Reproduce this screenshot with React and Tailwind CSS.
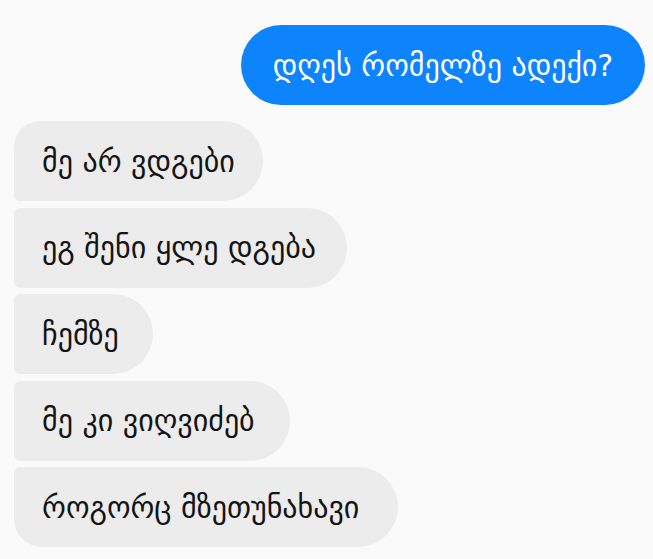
export default function App() {
  const received = [
    { text: 'მე არ ვდგები', w: 'w-[249px]', r: 'rounded-tl-[26px] rounded-bl-[6px]' },
    { text: 'ეგ შენი ყლე დგება', w: 'w-[333px]', r: 'rounded-tl-[6px] rounded-bl-[6px]' },
    { text: 'ჩემზე', w: 'w-[139px]', r: 'rounded-tl-[6px] rounded-bl-[6px]' },
    { text: 'მე კი ვიღვიძებ', w: 'w-[276px]', r: 'rounded-tl-[6px] rounded-bl-[6px]' },
    { text: 'როგორც მზეთუნახავი', w: 'w-[384px]', r: 'rounded-tl-[6px] rounded-bl-[28px]' },
  ];

  return (
    <div
      className="w-[653px] h-[559px] bg-[#fafafa] overflow-hidden pt-[25px] pl-[14px] pr-[8px]"
      style={{ fontFamily: '"DejaVu Sans", "Noto Sans", sans-serif' }}
    >
      <div className="flex justify-end">
        <div className="h-[80px] w-[404px] rounded-full bg-[#0d84fb] text-white text-[30px] flex items-center justify-center whitespace-nowrap">
          დღეს რომელზე ადექი?
        </div>
      </div>

      <div className="mt-[16px] flex flex-col gap-[6.5px]">
        {received.map((m, i) => (
          <div
            key={i}
            className={`h-[80px] ${m.w} ${m.r} rounded-tr-[40px] rounded-br-[40px] bg-[#ececec] text-[#141414] text-[30px] flex items-center pl-[28px] whitespace-nowrap`}
          >
            {m.text}
          </div>
        ))}
      </div>
    </div>
  );
}
